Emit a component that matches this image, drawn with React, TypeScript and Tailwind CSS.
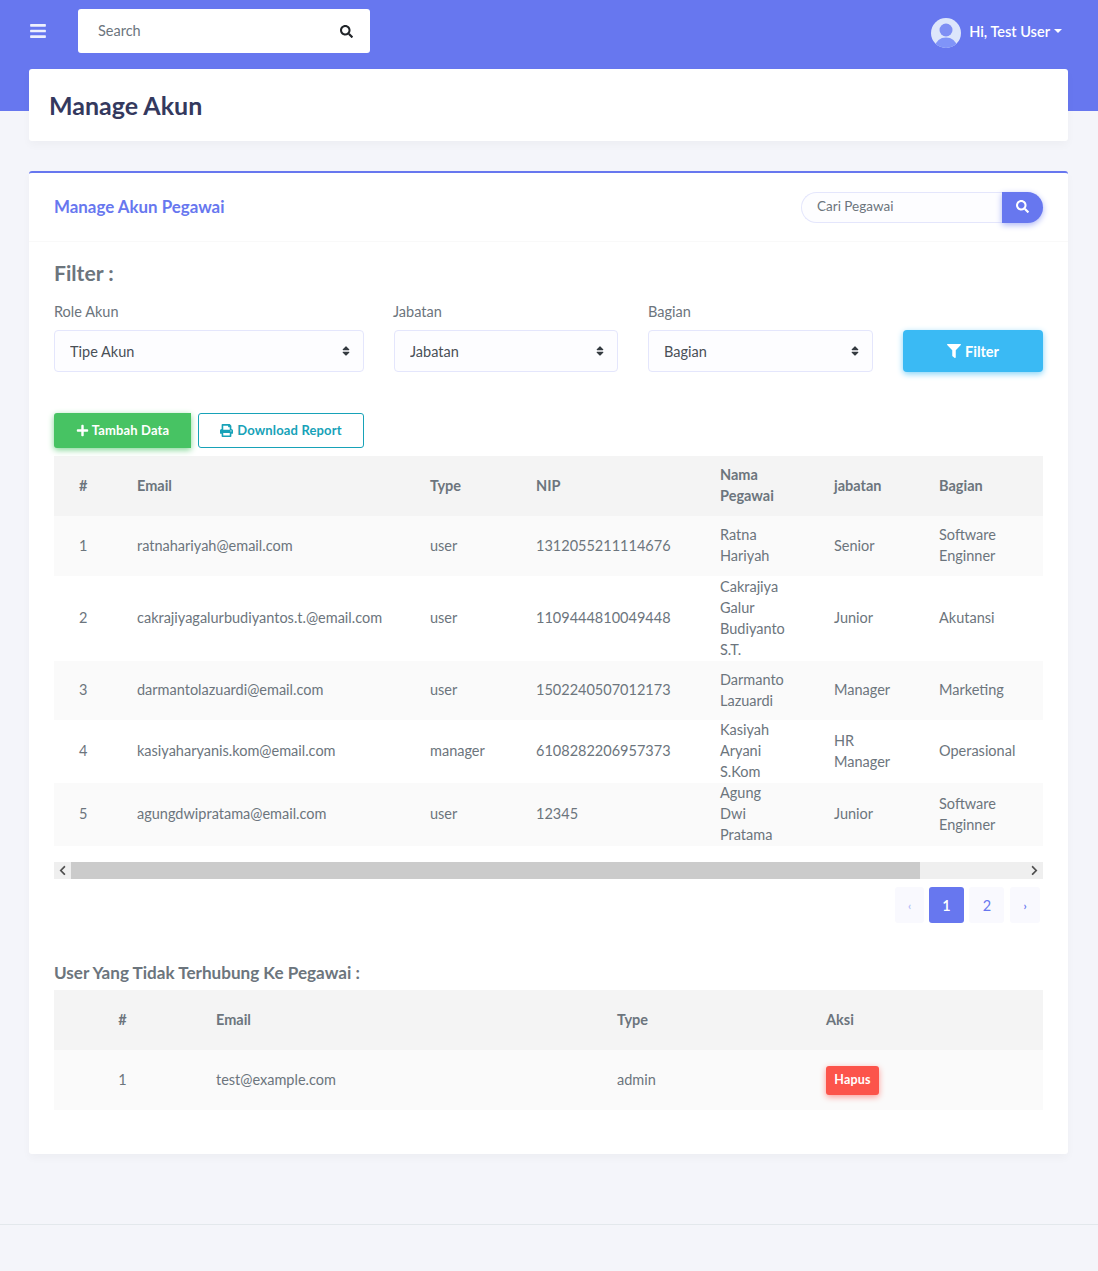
import React from "react";
import { FaBars, FaSearch, FaFilter, FaPlus, FaPrint, FaSort, FaChevronLeft, FaChevronRight } from "react-icons/fa";

const rows = [
  { n: 1, h: "h-[60px]", email: "ratnahariyah@email.com", type: "user", nip: "1312055211114676", nama: ["Ratna", "Hariyah"], jab: ["Senior"], bag: ["Software", "Enginner"] },
  { n: 2, h: "h-[85px]", email: "cakrajiyagalurbudiyantos.t.@email.com", type: "user", nip: "1109444810049448", nama: ["Cakrajiya", "Galur", "Budiyanto", "S.T."], jab: ["Junior"], bag: ["Akutansi"] },
  { n: 3, h: "h-[59px]", email: "darmantolazuardi@email.com", type: "user", nip: "1502240507012173", nama: ["Darmanto", "Lazuardi"], jab: ["Manager"], bag: ["Marketing"] },
  { n: 4, h: "h-[63px]", email: "kasiyaharyanis.kom@email.com", type: "manager", nip: "6108282206957373", nama: ["Kasiyah", "Aryani", "S.Kom"], jab: ["HR", "Manager"], bag: ["Operasional"] },
  { n: 5, h: "h-[63px]", email: "agungdwipratama@email.com", type: "user", nip: "12345", nama: ["Agung", "Dwi", "Pratama"], jab: ["Junior"], bag: ["Software", "Enginner"] },
];

function Cell({ items }: { items: (string | number)[] }) {
  return (
    <div className="-translate-y-px whitespace-nowrap">
      {items.map((t) => (
        <div key={t}>{t}</div>
      ))}
    </div>
  );
}

function SelectBox({ value, className }: { value: string; className: string }) {
  return (
    <div className={`relative h-[42px] ${className}`}>
      <select className="h-full w-full appearance-none rounded-[4px] border border-[#e4e6fc] bg-[#fdfdff] pl-[15px] text-[#495057] outline-none">
        <option>{value}</option>
      </select>
      <FaSort className="absolute right-[12px] top-[15px] text-[12px] text-[#343a40]" />
    </div>
  );
}

const th = "px-[25px] text-left font-bold align-middle";
const td = "px-[25px] align-middle";

export default function App() {
  return (
    <div className="min-h-[1271px] bg-[#f4f5fa] font-['Lato',sans-serif] text-[14.5px] leading-[21px] text-[#6c757d]">
      <header className="flex h-[111px] items-start justify-between bg-[#6777ef] pl-[30px] pr-[36px]">
        <div className="flex items-center pt-[9px]">
          <FaBars className="h-[18px] w-[16px] text-[#eef0fd]" />
          <div className="ml-[32px] flex h-[44px] w-[292px] items-center justify-between rounded-[3px] bg-white pl-[20px] pr-[17px]">
            <span className="pb-[2px] text-[#6c757d]">Search</span>
            <FaSearch className="text-[13px] text-[#212529]" />
          </div>
        </div>
        <div className="flex items-center pt-[18px] text-white">
          <svg width="30" height="30" viewBox="0 0 30 30" className="shrink-0">
            <defs>
              <clipPath id="av"><circle cx="15" cy="15" r="15" /></clipPath>
            </defs>
            <g clipPath="url(#av)">
              <rect width="30" height="30" fill="#dde6fb" />
              <circle cx="15" cy="12" r="6.5" fill="#7f8ff4" />
              <ellipse cx="15" cy="28" rx="10.5" ry="8.5" fill="#8094f8" />
            </g>
          </svg>
          <span className="ml-[8px] pb-[4px] font-semibold">Hi, Test User</span>
          <span className="ml-[4px] mb-[4px] h-0 w-0 border-x-[4px] border-t-[4px] border-x-transparent border-t-white" />
        </div>
      </header>

      <main className="relative -mt-[42px] pl-[29px] pr-[30px]">
        <section className="flex h-[72px] items-center rounded-[3px] bg-white pl-[20px] shadow-[0_4px_8px_rgba(0,0,0,0.03)]">
          <h1 className="text-[25px] font-bold leading-none text-[#34395e]">Manage Akun</h1>
        </section>

        <section className="mt-[30px] rounded-[3px] border-t-2 border-[#6777ef] bg-white shadow-[0_4px_8px_rgba(0,0,0,0.03)]">
          <div className="flex h-[69px] items-center justify-between border-b border-[#f9f9f9] px-[25px]">
            <h2 className="pb-[2px] text-[16.9px] font-bold text-[#6777ef]">Manage Akun Pegawai</h2>
            <div className="flex h-[31px] w-[242px]">
              <div className="flex flex-1 items-center rounded-l-full border border-r-0 border-[#e4e6fc] bg-[#fdfdff] pb-[2px] pl-[15px] text-[13.5px] text-[#6c757d]">
                Cari Pegawai
              </div>
              <button className="flex w-[41px] items-center justify-center rounded-r-full bg-[#6777ef] pb-px text-white shadow-[0_2px_6px_#acb5f6]">
                <FaSearch className="text-[13px]" />
              </button>
            </div>
          </div>

          <div className="px-[25px] pt-[20px] pb-[44px]">
            <h3 className="-translate-y-px text-[21.2px] font-bold leading-[24px] text-[#6c757d]">Filter :</h3>
            <div className="mt-[15px] flex items-end">
              <div className="w-[310px]">
                <label className="mb-[8px] block">Role Akun</label>
                <SelectBox value="Tipe Akun" className="w-[310px]" />
              </div>
              <div className="ml-[30px] w-[224px]">
                <label className="mb-[8px] -ml-px block">Jabatan</label>
                <SelectBox value="Jabatan" className="w-[224px]" />
              </div>
              <div className="ml-[30px] w-[225px]">
                <label className="mb-[8px] block">Bagian</label>
                <SelectBox value="Bagian" className="w-[225px]" />
              </div>
              <button className="ml-[30px] flex h-[42px] w-[140px] items-center justify-center gap-[4px] rounded-[4px] bg-[#3abaf4] font-bold text-white shadow-[0_2px_6px_#82d3f8]">
                <FaFilter className="text-[14px]" /> Filter
              </button>
            </div>

            <div className="mt-[41px] flex gap-[7px] text-[13px] font-bold tracking-[0.15px]">
              <button className="flex h-[35px] w-[137px] items-center justify-center gap-[3px] rounded-l-[3px] bg-[#47c363] text-white shadow-[0_2px_6px_#81d694]">
                <FaPlus className="text-[13px]" /> Tambah Data
              </button>
              <button className="flex h-[35px] w-[166px] items-center justify-center gap-[4px] rounded-[3px] border border-[#17a2b8] bg-white text-[#17a2b8]">
                <FaPrint className="text-[13px]" /> Download Report
              </button>
            </div>

            <div className="mt-[8px] overflow-hidden">
              <table className="w-[1112px] table-fixed border-collapse">
                <colgroup>
                  <col className="w-[58px]" />
                  <col className="w-[293px]" />
                  <col className="w-[106px]" />
                  <col className="w-[184px]" />
                  <col className="w-[114px]" />
                  <col className="w-[105px]" />
                  <col className="w-[126px]" />
                  <col className="w-[126px]" />
                </colgroup>
                <thead>
                  <tr className="h-[60px] bg-[#f4f4f4]">
                    <th className={th}><Cell items={["#"]} /></th>
                    <th className={th}><Cell items={["Email"]} /></th>
                    <th className={th}><Cell items={["Type"]} /></th>
                    <th className={th}><Cell items={["NIP"]} /></th>
                    <th className={th}><Cell items={["Nama", "Pegawai"]} /></th>
                    <th className={th}><Cell items={["jabatan"]} /></th>
                    <th className={th}><Cell items={["Bagian"]} /></th>
                    <th className={th} />
                  </tr>
                </thead>
                <tbody>
                  {rows.map((r) => (
                    <tr key={r.n} className={`${r.h} ${r.n % 2 ? "bg-[#fafafa]" : "bg-white"}`}>
                      <td className={td}><Cell items={[r.n]} /></td>
                      <td className={td}><Cell items={[r.email]} /></td>
                      <td className={td}><Cell items={[r.type]} /></td>
                      <td className={td}><Cell items={[r.nip]} /></td>
                      <td className={td}><Cell items={r.nama} /></td>
                      <td className={td}><Cell items={r.jab} /></td>
                      <td className={td}><Cell items={r.bag} /></td>
                      <td className={td} />
                    </tr>
                  ))}
                </tbody>
              </table>
            </div>

            <div className="mt-[16px] flex h-[17px] items-center bg-[#efefef] text-[#505050]">
              <span className="flex w-[17px] justify-center"><FaChevronLeft className="text-[11px]" /></span>
              <div className="h-full w-[849px] bg-[#cbcbcb]" />
              <span className="ml-auto flex w-[17px] justify-center"><FaChevronRight className="text-[11px]" /></span>
            </div>

            <nav className="mt-[8px] flex justify-end gap-[5px] pr-[3px]">
              <span className="flex h-[36px] w-[29px] items-center justify-center rounded-[3px] bg-[#f9f9fe] text-[11px] font-bold text-[#b4bcf7]">‹</span>
              <span className="flex h-[36px] w-[35px] items-center justify-center rounded-[3px] bg-[#6777ef] font-semibold text-white">1</span>
              <span className="flex h-[36px] w-[35px] items-center justify-center rounded-[3px] bg-[#f9f9fe] pl-px text-[#6777ef]">2</span>
              <span className="ml-[1px] flex h-[36px] w-[30px] items-center justify-center rounded-[3px] bg-[#f9f9fe] text-[11px] font-bold text-[#6777ef]">›</span>
            </nav>

            <h4 className="mt-[38px] text-[17.1px] font-bold leading-[24px] text-[#6c757d]">User Yang Tidak Terhubung Ke Pegawai :</h4>
            <table className="mt-[5px] w-full table-fixed border-collapse">
              <colgroup>
                <col className="w-[137px]" />
                <col className="w-[401px]" />
                <col className="w-[209px]" />
                <col />
              </colgroup>
              <thead>
                <tr className="h-[60px] bg-[#f4f4f4]">
                  <th className="text-center font-bold"><Cell items={["#"]} /></th>
                  <th className={th}><Cell items={["Email"]} /></th>
                  <th className={th}><Cell items={["Type"]} /></th>
                  <th className={th}><Cell items={["Aksi"]} /></th>
                </tr>
              </thead>
              <tbody>
                <tr className="h-[60px] bg-[#fafafa]">
                  <td className="text-center"><Cell items={[1]} /></td>
                  <td className={td}><Cell items={["test@example.com"]} /></td>
                  <td className={td}><Cell items={["admin"]} /></td>
                  <td className={td}>
                    <button className="flex h-[29px] w-[53px] items-center justify-center rounded-[3px] bg-[#fc544b] pb-[2px] text-[12.5px] font-bold tracking-[0.2px] text-white shadow-[0_2px_6px_#fd9b96]">Hapus</button>
                  </td>
                </tr>
              </tbody>
            </table>
          </div>
        </section>
      </main>

      <footer className="mt-[70px] h-[47px] border-t border-[#e3e8ec]" />
    </div>
  );
}
